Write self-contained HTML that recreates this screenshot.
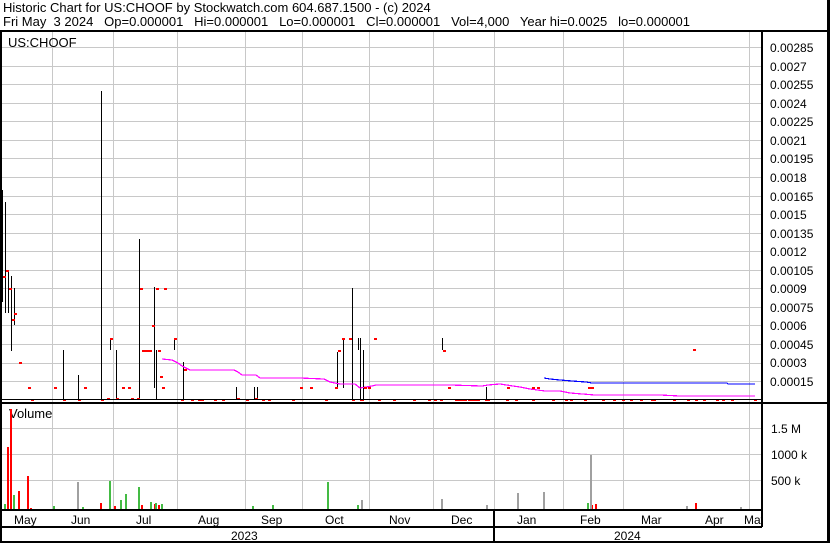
<!DOCTYPE html>
<html><head><meta charset="utf-8"><style>
html,body{margin:0;padding:0;background:#fff;}
svg{display:block;}
text{font-family:"Liberation Sans",Arial,sans-serif;}
</style></head><body>
<svg width="830" height="543" viewBox="0 0 830 543" xmlns="http://www.w3.org/2000/svg" shape-rendering="crispEdges">
<rect width="830" height="543" fill="#fff"/>
<text x="3" y="12" font-size="13" fill="#000">Historic Chart for US:CHOOF by Stockwatch.com 604.687.1500 - (c) 2024</text>
<text x="3" y="26" font-size="13" fill="#000" xml:space="preserve">Fri May  3 2024   Op=0.000001   Hi=0.000001   Lo=0.000001   Cl=0.000001   Vol=4,000   Year hi=0.0025   lo=0.000001</text>
<!-- grid -->
<g stroke="#c8c8c8" stroke-width="1">
<path d="M52.5 32V510M113.5 32V510M177.5 32V510M245.5 32V510M302.5 32V510M369.5 32V510M433.5 32V510M494.5 32V510M563.5 32V510M623.5 32V510M749.5 32V510"/>
<path d="M2 47.5H762M2 66.5H762M2 84.5H762M2 103.5H762M2 121.5H762M2 140.5H762M2 158.5H762M2 177.5H762M2 196.5H762M2 214.5H762M2 233.5H762M2 251.5H762M2 270.5H762M2 288.5H762M2 307.5H762M2 325.5H762M2 344.5H762M2 363.5H762M2 381.5H762"/>
<path d="M2 428.5H762M2 454.5H762M2 480.5H762"/>
</g>
<text x="8" y="47" font-size="13">US:CHOOF</text>
<text x="9" y="418" font-size="13">Volume</text>
<!-- price lines -->
<g stroke="#000" stroke-width="1" transform="translate(0.5,0)">
<path d="M5 202V313M8 270V313M11 276V351M14 288V325M63 350V400M78 375V400M101 91V400M110 338V350M116 350V400M139 239V400M154 287V388M156 350V400M174 338V350M183 362V400M236 387V400M254 387V400M257 387V400M337 352V388M343 338V388M352 288V400M358 338V350M360 338V400M363 350V400M442 338V350M486 387V400"/>
</g>
<rect x="0" y="190" width="3" height="112" fill="#000"/>
<!-- MA lines -->
<polyline fill="none" stroke="#ff00ff" stroke-width="1.2" points="162,359 172,360 178,363 182,366 186,368 190,370 200,370 234,370 238,372 242,375 256,375 260,378 286,378 300,378 324,379 330,382 340,384 355,384 360,388 372,386 376,385 446,385 450,385 482,386 488,385 500,384 513,386 520,387 530,389 545,391 560,391 570,393 595,395 660,395 680,396 755,396"/>
<polyline fill="none" stroke="#0000ff" stroke-width="1.2" points="544,378 550,379 560,380 572,381 586,382 592,383 727,383 728,384 755,384"/>
<!-- red dots -->
<g fill="#ff0000">
<rect x="3" y="276" width="3" height="2"/><rect x="6" y="270" width="3" height="2"/><rect x="9" y="288" width="3" height="2"/><rect x="12" y="319" width="3" height="2"/><rect x="14" y="313" width="3" height="2"/><rect x="19" y="362" width="3" height="2"/><rect x="28" y="387" width="3" height="2"/><rect x="31" y="399" width="3" height="2"/><rect x="54" y="387" width="3" height="2"/><rect x="63" y="399" width="3" height="2"/><rect x="78" y="399" width="3" height="2"/><rect x="84" y="387" width="3" height="2"/><rect x="101" y="399" width="3" height="2"/><rect x="107" y="398" width="3" height="2"/><rect x="110" y="338" width="3" height="2"/><rect x="116" y="398" width="3" height="2"/><rect x="122" y="387" width="3" height="2"/><rect x="128" y="387" width="3" height="2"/><rect x="131" y="398" width="3" height="2"/><rect x="137" y="398" width="3" height="2"/><rect x="140" y="288" width="3" height="2"/><rect x="142" y="350" width="10" height="2"/><rect x="152" y="325" width="3" height="2"/><rect x="156" y="288" width="3" height="2"/><rect x="164" y="288" width="3" height="2"/><rect x="158" y="350" width="3" height="2"/><rect x="160" y="376" width="3" height="2"/><rect x="162" y="387" width="3" height="2"/><rect x="174" y="338" width="3" height="2"/><rect x="184" y="369" width="3" height="2"/><rect x="181" y="399" width="3" height="2"/><rect x="191" y="399" width="3" height="2"/><rect x="198" y="399" width="6" height="2"/><rect x="214" y="399" width="3" height="2"/><rect x="222" y="399" width="3" height="2"/><rect x="237" y="398" width="3" height="2"/><rect x="246" y="399" width="3" height="2"/><rect x="255" y="398" width="3" height="2"/><rect x="262" y="399" width="3" height="2"/><rect x="268" y="399" width="3" height="2"/><rect x="292" y="399" width="3" height="2"/><rect x="300" y="387" width="3" height="2"/><rect x="310" y="387" width="3" height="2"/><rect x="325" y="399" width="3" height="2"/><rect x="335" y="387" width="3" height="2"/><rect x="338" y="350" width="3" height="2"/><rect x="342" y="338" width="3" height="2"/><rect x="349" y="338" width="3" height="2"/><rect x="352" y="399" width="3" height="2"/><rect x="360" y="399" width="4" height="2"/><rect x="364" y="387" width="3" height="2"/><rect x="368" y="387" width="3" height="2"/><rect x="374" y="338" width="3" height="2"/><rect x="378" y="399" width="3" height="2"/><rect x="393" y="399" width="3" height="2"/><rect x="413" y="399" width="3" height="2"/><rect x="428" y="399" width="3" height="2"/><rect x="434" y="399" width="3" height="2"/><rect x="440" y="399" width="3" height="2"/><rect x="443" y="350" width="3" height="2"/><rect x="448" y="387" width="3" height="2"/><rect x="455" y="399" width="12" height="2"/><rect x="468" y="399" width="12" height="2"/><rect x="485" y="399" width="5" height="2"/><rect x="507" y="387" width="3" height="2"/><rect x="506" y="399" width="3" height="2"/><rect x="532" y="399" width="3" height="2"/><rect x="532" y="387" width="3" height="2"/><rect x="515" y="399" width="3" height="2"/><rect x="537" y="387" width="3" height="2"/><rect x="552" y="399" width="3" height="2"/><rect x="565" y="399" width="3" height="2"/><rect x="570" y="399" width="3" height="2"/><rect x="584" y="399" width="3" height="2"/><rect x="588" y="387" width="6" height="2"/><rect x="602" y="399" width="3" height="2"/><rect x="613" y="399" width="3" height="2"/><rect x="622" y="399" width="3" height="2"/><rect x="630" y="399" width="3" height="2"/><rect x="640" y="399" width="3" height="2"/><rect x="651" y="399" width="5" height="2"/><rect x="673" y="399" width="3" height="2"/><rect x="693" y="349" width="3" height="2"/><rect x="687" y="399" width="3" height="2"/><rect x="695" y="399" width="3" height="2"/><rect x="703" y="399" width="3" height="2"/><rect x="716" y="399" width="3" height="2"/><rect x="722" y="399" width="3" height="2"/><rect x="731" y="399" width="3" height="2"/><rect x="754" y="399" width="3" height="2"/>
</g>
<!-- volume bars -->
<g fill="#ff0000">
<rect x="7" y="447" width="2" height="62"/><rect x="10" y="409" width="2" height="100"/><rect x="18" y="491" width="2" height="18"/><rect x="27" y="476" width="2" height="33"/><rect x="30" y="508" width="2" height="1"/><rect x="100" y="503" width="2" height="6"/><rect x="114" y="506" width="2" height="3"/><rect x="141" y="505" width="2" height="4"/><rect x="154" y="504" width="2" height="5"/><rect x="158" y="505" width="2" height="4"/><rect x="591" y="505" width="2" height="4"/><rect x="595" y="504" width="2" height="5"/><rect x="695" y="503" width="2" height="6"/>
</g>
<g fill="#44bb44">
<rect x="4" y="504" width="2" height="5"/><rect x="13" y="495" width="2" height="14"/><rect x="109" y="481" width="2" height="28"/><rect x="120" y="500" width="2" height="9"/><rect x="125" y="494" width="2" height="15"/><rect x="138" y="487" width="2" height="22"/><rect x="150" y="502" width="2" height="7"/><rect x="155" y="503" width="2" height="6"/><rect x="161" y="504" width="2" height="5"/><rect x="327" y="482" width="2" height="27"/><rect x="357" y="505" width="2" height="4"/><rect x="53" y="506" width="2" height="3"/><rect x="82" y="507" width="2" height="2"/><rect x="252" y="506" width="2" height="3"/><rect x="272" y="505" width="2" height="4"/><rect x="587" y="503" width="2" height="6"/>
</g>
<g fill="#a0a0a0">
<rect x="77" y="482" width="2" height="27"/><rect x="361" y="500" width="2" height="9"/><rect x="441" y="499" width="2" height="10"/><rect x="517" y="493" width="2" height="16"/><rect x="543" y="492" width="2" height="17"/><rect x="590" y="455" width="2" height="54"/><rect x="486" y="505" width="2" height="4"/><rect x="686" y="506" width="2" height="3"/><rect x="740" y="507" width="2" height="2"/>
</g>
<!-- frame -->
<g fill="#000">
<rect x="0" y="30" width="830" height="2"/>
<rect x="0" y="30" width="2" height="513"/>
<rect x="827" y="0" width="3" height="543"/>
<rect x="761" y="30" width="2" height="497"/>
<rect x="2" y="399" width="760" height="1"/>
<rect x="2" y="402" width="826" height="2"/>
<rect x="2" y="509" width="760" height="2"/>
<rect x="0" y="526" width="762" height="2"/>
<rect x="0" y="541" width="830" height="2"/>
<rect x="493" y="511" width="2" height="30"/>
</g>
<g font-size="12" fill="#000">
<text x="770" y="52">0.00285</text><text x="770" y="71">0.0027</text><text x="770" y="89">0.00255</text><text x="770" y="108">0.0024</text><text x="770" y="126">0.00225</text><text x="770" y="145">0.0021</text><text x="770" y="163">0.00195</text><text x="770" y="182">0.0018</text><text x="770" y="201">0.00165</text><text x="770" y="219">0.0015</text><text x="770" y="238">0.00135</text><text x="770" y="256">0.0012</text><text x="770" y="275">0.00105</text><text x="770" y="293">0.0009</text><text x="770" y="312">0.00075</text><text x="770" y="330">0.0006</text><text x="770" y="349">0.00045</text><text x="770" y="367">0.0003</text><text x="770" y="386">0.00015</text>
<text x="771" y="433">1.5 M</text><text x="771" y="459">1000 k</text><text x="771" y="485">500 k</text>
<text x="14" y="524">May</text><text x="71" y="524">Jun</text><text x="136" y="524">Jul</text><text x="198" y="524">Aug</text><text x="261" y="524">Sep</text><text x="325" y="524">Oct</text><text x="389" y="524">Nov</text><text x="451" y="524">Dec</text><text x="517" y="524">Jan</text><text x="580" y="524">Feb</text><text x="641" y="524">Mar</text><text x="705" y="524">Apr</text>
<text x="231" y="540">2023</text><text x="614" y="540">2024</text>
</g>
<svg x="0" y="510" width="761" height="16"><text x="744" y="14" font-size="12">May</text></svg>
</svg>
</body></html>
